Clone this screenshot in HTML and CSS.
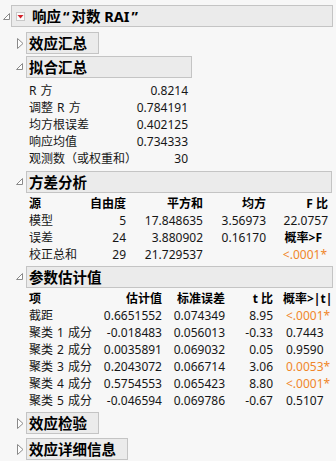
FILE: index.html
```html
<!DOCTYPE html>
<html>

<head>
    <title>响应 对数 RAI</title>
    <meta charset="utf-8">
    <meta name="viewport" content="width=device-width, initial-scale=1.0">
    <link rel="stylesheet" href="styles.css">
</head>

<body>

    <div class="rapport">
        <div class="knude top">
            <div class="linje">
                <span class="pil"><svg width="9" height="9" viewBox="0 0 9 9"><path d="M7.5 1.5 L7.5 7.5 L1.5 7.5 Z" fill="#fff" stroke="#8a8a8a" stroke-width="1"/></svg></span>
                <div class="hoved bred">
                    <span class="menu"><svg width="9" height="9" viewBox="0 0 9 9"><rect x="0.5" y="0.5" width="8" height="8" fill="#fafafa" stroke="#c8c8c8"/><path d="M1.5 3 L7.5 3 L4.5 6.5 Z" fill="#d4202a"/></svg></span>响应<span class="anf">“</span>对数 RAI<span class="anf">”</span>
                </div>
            </div>

            <div class="born">
                <!-- lukket: effektsammendrag -->
                <div class="knude k-effekt">
                    <div class="linje">
                        <span class="pil"><svg width="8" height="11" viewBox="0 0 8 11"><path d="M1.5 0.5 L7 5.5 L1.5 10.5 Z" fill="#fff" stroke="#8a8a8a"/></svg></span>
                        <div class="hoved">效应汇总</div>
                    </div>
                </div>

                <!-- tilpasning -->
                <div class="knude k-fit">
                    <div class="linje">
                        <span class="pil"><svg width="8" height="8" viewBox="0 0 8 8"><path d="M6.5 0.5 L6.5 6.5 L0.5 6.5 Z" fill="#fff" stroke="#8a8a8a"/></svg></span>
                        <div class="hoved fit-bred">拟合汇总</div>
                    </div>
                    <div class="tabel fit">
                        <div class="navn">R 方</div><div class="tal">0.8214</div>
                        <div class="navn">调整 R 方</div><div class="tal">0.784191</div>
                        <div class="navn">均方根误差</div><div class="tal">0.402125</div>
                        <div class="navn">响应均值</div><div class="tal">0.734333</div>
                        <div class="navn">观测数（或权重和）</div><div class="tal">30</div>
                    </div>
                </div>

                <!-- variansanalyse -->
                <div class="knude k-anova">
                    <div class="linje">
                        <span class="pil"><svg width="8" height="8" viewBox="0 0 8 8"><path d="M6.5 0.5 L6.5 6.5 L0.5 6.5 Z" fill="#fff" stroke="#8a8a8a"/></svg></span>
                        <div class="hoved anova-bred">方差分析</div>
                    </div>
                    <div class="tabel anova">
                        <div class="fed">源</div><div class="tal fed">自由度</div><div class="tal fed">平方和</div><div class="tal fed">均方</div><div class="tal fed">F 比</div>
                        <div>模型</div><div class="tal">5</div><div class="tal">17.848635</div><div class="tal">3.56973</div><div class="tal">22.0757</div>
                        <div>误差</div><div class="tal">24</div><div class="tal">3.880902</div><div class="tal">0.16170</div><div class="tal fed sand">概率&gt;F</div>
                        <div>校正总和</div><div class="tal">29</div><div class="tal">21.729537</div><div class="tal"></div><div class="tal sig p1">&lt;.0001*</div>
                    </div>
                </div>

                <!-- parametre -->
                <div class="knude k-param">
                    <div class="linje">
                        <span class="pil"><svg width="8" height="8" viewBox="0 0 8 8"><path d="M6.5 0.5 L6.5 6.5 L0.5 6.5 Z" fill="#fff" stroke="#8a8a8a"/></svg></span>
                        <div class="hoved param-bred">参数估计值</div>
                    </div>
                    <div class="tabel param">
                        <div class="fed">项</div><div class="tal fed">估计值</div><div class="tal fed">标准误差</div><div class="tal fed">t 比</div><div class="prob fed hd">概率&gt;|t|</div>
                        <div>截距</div><div class="tal">0.6651552</div><div class="tal">0.074349</div><div class="tal">8.95</div><div class="prob sig">&lt;.0001*</div>
                        <div class="navn">聚类 1 成分</div><div class="tal">-0.018483</div><div class="tal">0.056013</div><div class="tal">-0.33</div><div class="prob">0.7443</div>
                        <div class="navn">聚类 2 成分</div><div class="tal">0.0035891</div><div class="tal">0.069032</div><div class="tal">0.05</div><div class="prob">0.9590</div>
                        <div class="navn">聚类 3 成分</div><div class="tal">0.2043072</div><div class="tal">0.066714</div><div class="tal">3.06</div><div class="prob sig">0.0053*</div>
                        <div class="navn">聚类 4 成分</div><div class="tal">0.5754553</div><div class="tal">0.065423</div><div class="tal">8.80</div><div class="prob sig">&lt;.0001*</div>
                        <div class="navn">聚类 5 成分</div><div class="tal">-0.046594</div><div class="tal">0.069786</div><div class="tal">-0.67</div><div class="prob">0.5107</div>
                    </div>
                </div>

                <div class="knude k-test">
                    <div class="linje">
                        <span class="pil"><svg width="8" height="11" viewBox="0 0 8 11"><path d="M1.5 0.5 L7 5.5 L1.5 10.5 Z" fill="#fff" stroke="#8a8a8a"/></svg></span>
                        <div class="hoved">效应检验</div>
                    </div>
                </div>

                <div class="knude k-detalje">
                    <div class="linje">
                        <span class="pil"><svg width="8" height="11" viewBox="0 0 8 11"><path d="M1.5 0.5 L7 5.5 L1.5 10.5 Z" fill="#fff" stroke="#8a8a8a"/></svg></span>
                        <div class="hoved">效应详细信息</div>
                    </div>
                </div>
            </div>
        </div>
    </div>

</body></html>
```

FILE: styles.css
```css
* {
    box-sizing: border-box;
}

body {
    margin: 0;
    background-color: #f7f7f7;
    font-family: "Noto Sans", "Noto Sans CJK SC", sans-serif;
    font-size: 12px;
    color: #161616;
}

.rapport {
    padding: 5px 0 0 2px;
}

.linje {
    display: flex;
    align-items: center;
}

.pil {
    display: flex;
    width: 10px;
    height: 22px;
    align-items: center;
}

.top > .linje .pil {
    width: 9px;
}

.hoved {
    height: 22px;
    line-height: 20px;
    border: 1px solid #c4c4c4;
    background-color: #ebebeb;
    color: #000;
    font-weight: bold;
    font-size: 14.5px;
    padding: 0 11px 0 2px;
    white-space: nowrap;
}

.bred {
    display: flex;
    align-items: center;
    width: 322px;
    padding-left: 4px;
}

.anf {
    padding: 0 2px;
}

.menu {
    display: flex;
    width: 9px;
    height: 9px;
    margin-right: 7px;
}

.born {
    padding-left: 14px;
}

.fit-bred {
    width: 166px;
}

.anova-bred {
    width: 306px;
}

.param-bred {
    width: 307px;
}

/* afstande mellem knuderne */
.k-effekt {
    margin-top: 5px;
}

.k-fit {
    margin-top: 2px;
}

.k-anova {
    margin-top: 4px;
}

.k-param {
    margin-top: 3px;
}

.k-test {
    margin-top: 3px;
}

.k-detalje {
    margin-top: 4px;
}

.tabel {
    display: grid;
    margin-left: 13px;
    line-height: 17px;
    white-space: nowrap;
}

.navn {
    word-spacing: 1px;
}

.fit {
    grid-template-columns: 105px 54px;
    margin-top: 4px;
}

.anova {
    grid-template-columns: 56px 41px 77px 63px 62px;
    margin-top: 2px;
}

.param {
    grid-template-columns: 60px 73px 63px 48px 57px;
    margin-top: 2px;
}

.tal {
    text-align: right;
}

.fed {
    font-weight: bold;
    color: #000;
}

.sand {
    padding-right: 6px;
}

.p1 {
    padding-right: 1px;
}

.prob {
    padding-left: 13px;
}

.prob.hd {
    padding-left: 10px;
}

.sig {
    color: #f0862a;
}
```
